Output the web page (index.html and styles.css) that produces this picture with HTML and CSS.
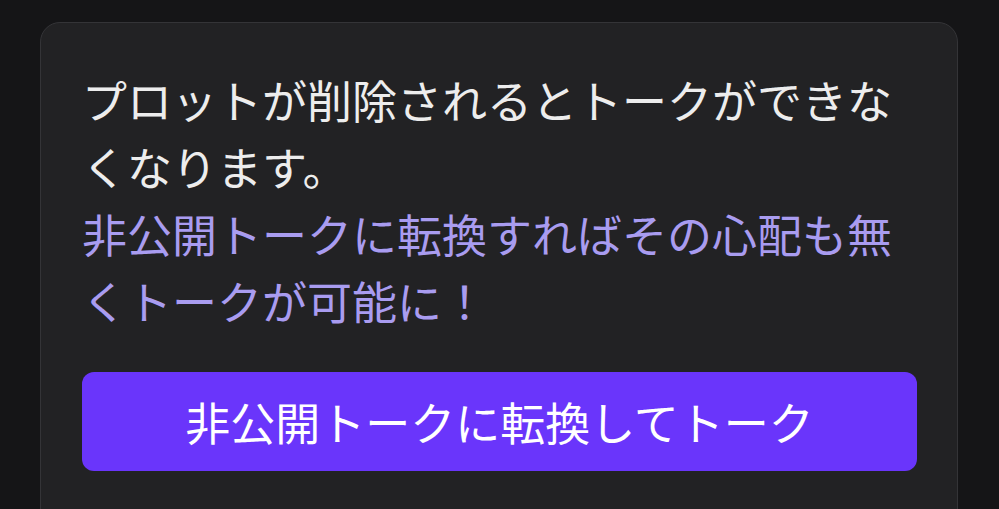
FILE: index.html
```html
<!DOCTYPE html>
<html lang="ja">
<head>
    <meta charset="UTF-8">
    <meta name="viewport" content="width=device-width, initial-scale=1.0">
    <title>非公開トークに転換</title>
    <link rel="stylesheet" href="styles.css">
</head>
<body>
    <div class="card">
        <p class="message">
            プロットが削除されるとトークができなくなります。<br>
            <span class="hint">非公開トークに転換すればその心配も無くトークが可能に！</span>
        </p>
        <button class="convert-button">非公開トークに転換してトーク</button>
    </div>
</body>
</html>
```

FILE: styles.css
```css
html, body {
    height: 100%;
}
body {
    margin: 0;
    padding: 22px 41px 0 40px;
    box-sizing: border-box;
    background: #151517;
    font-family: 'Noto Sans CJK JP', 'Noto Sans', sans-serif;
    overflow: hidden;
}
.card {
    box-sizing: border-box;
    background: #222224;
    border: 1px solid #343437;
    border-radius: 20px;
    padding: 43px 40px 40px 41px;
    height: 510px;
}
.message {
    margin: 0;
    font-size: 45px;
    line-height: 67px;
    color: #ededed;
}
.hint {
    color: #a99cf0;
}
.convert-button {
    display: block;
    width: 100%;
    height: 99px;
    margin-top: 38px;
    background: #6a35fb;
    color: #ffffff;
    border: none;
    border-radius: 12px;
    font-family: inherit;
    font-size: 45px;
    cursor: pointer;
}
```
